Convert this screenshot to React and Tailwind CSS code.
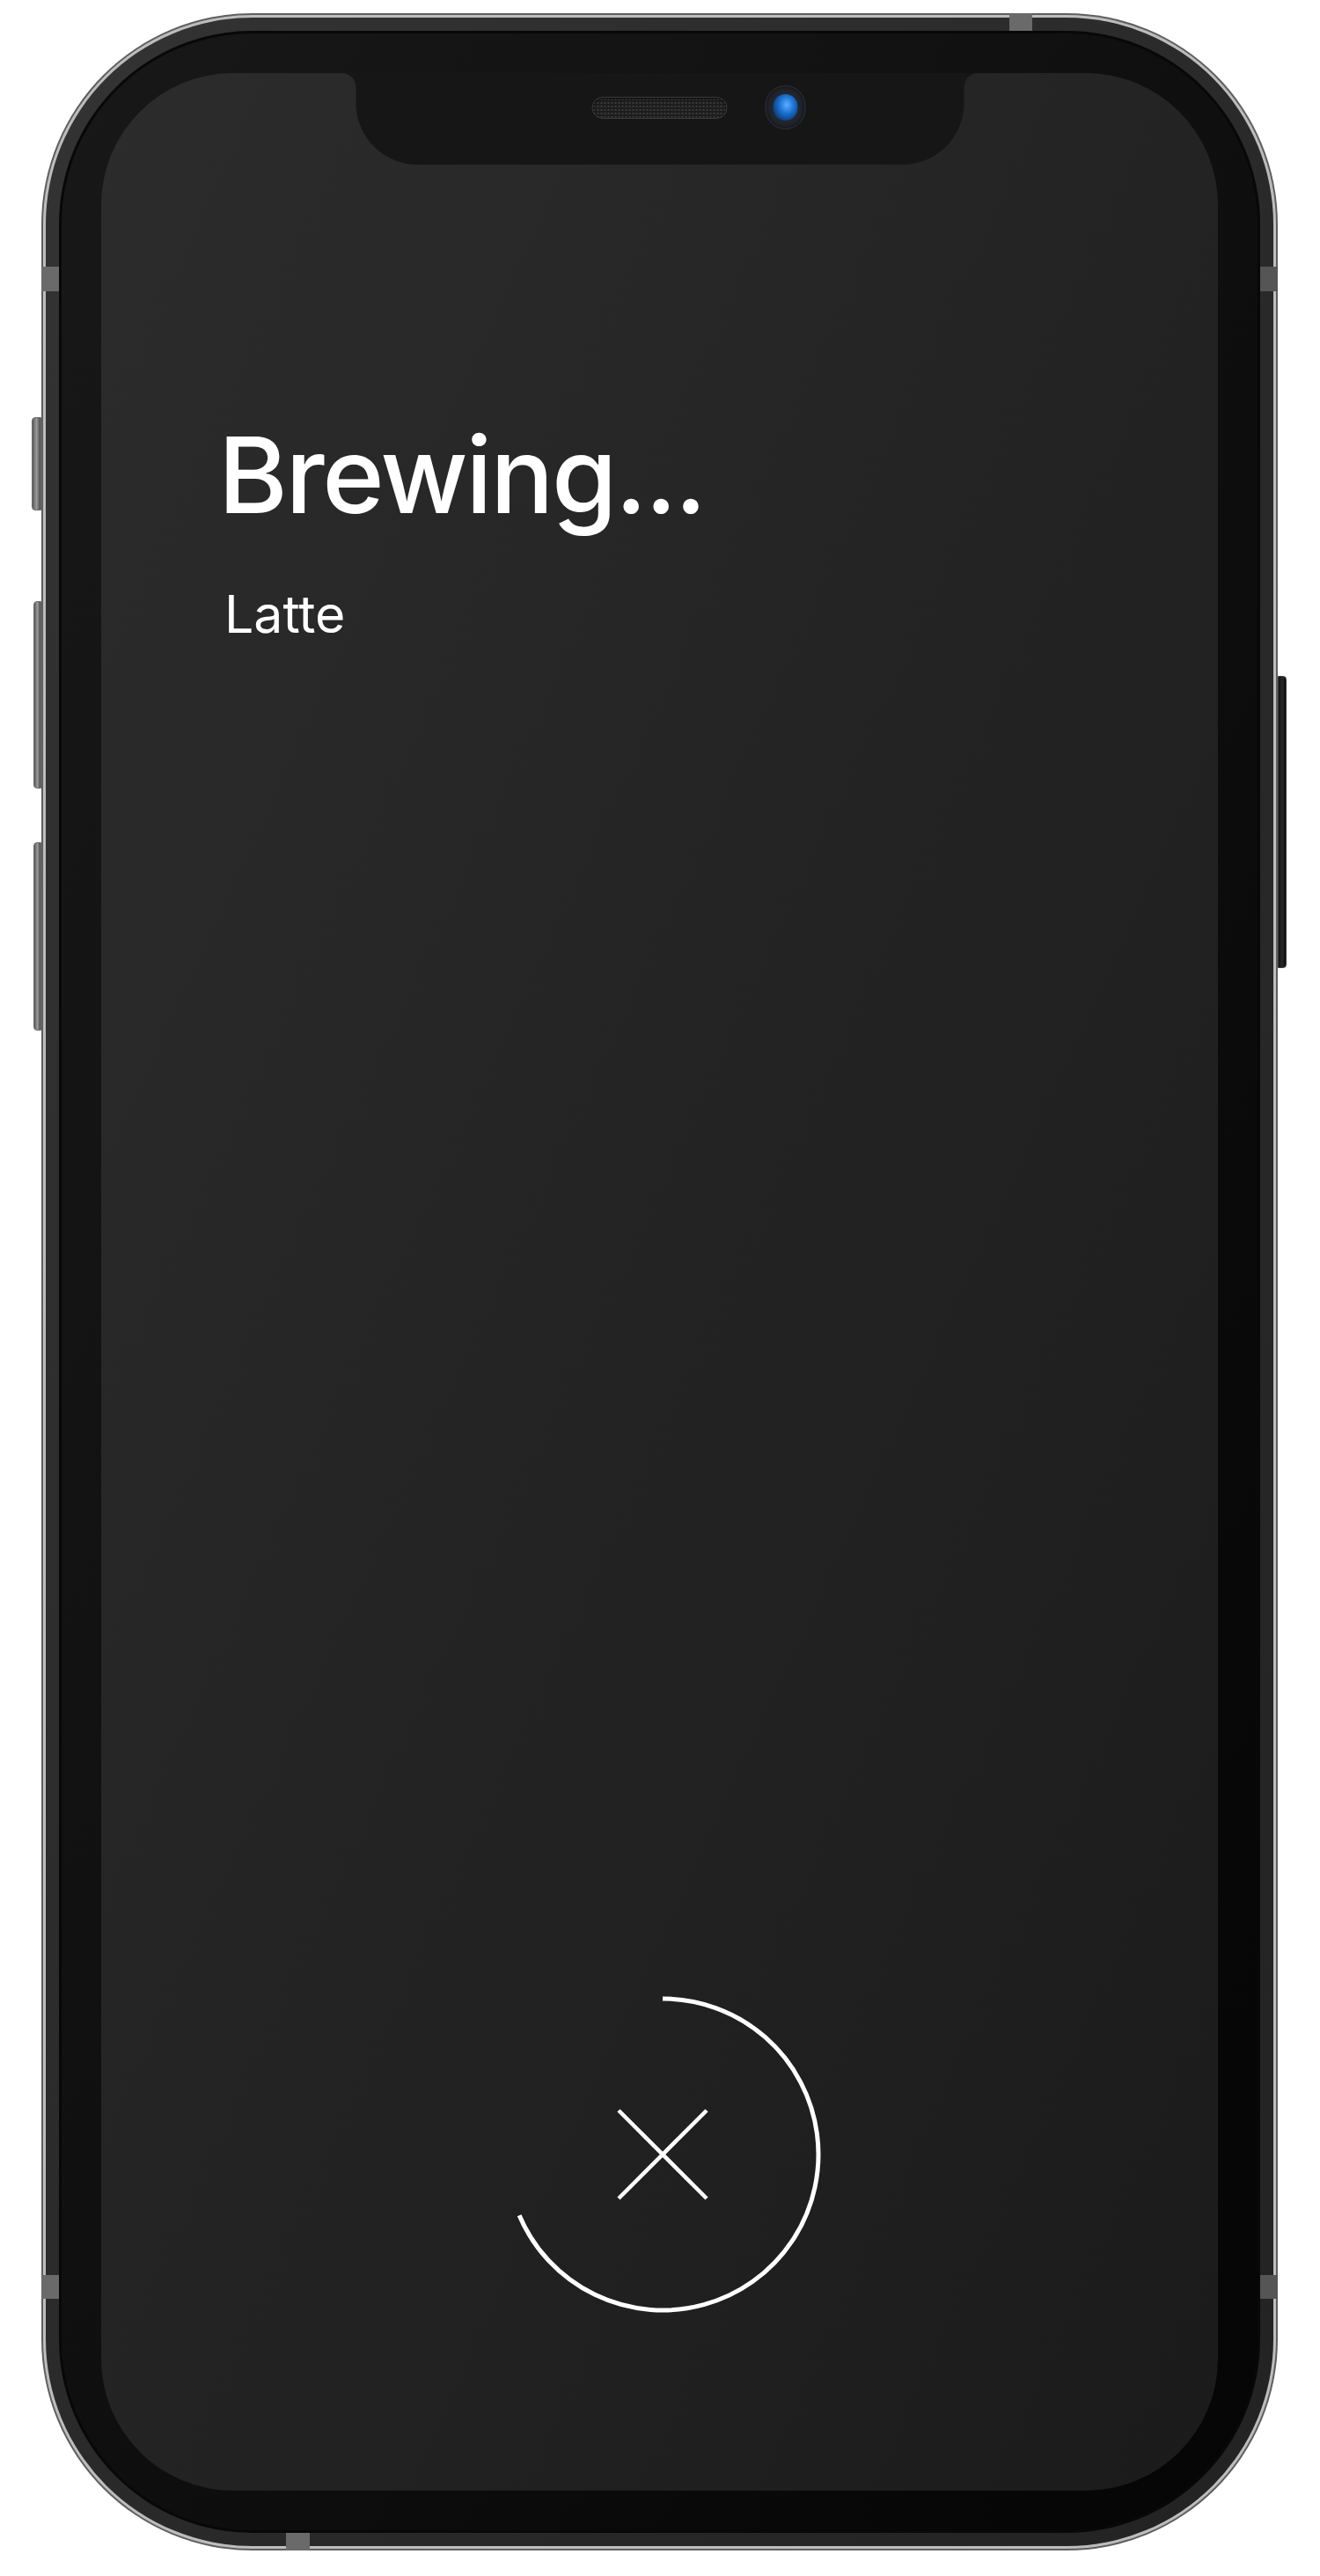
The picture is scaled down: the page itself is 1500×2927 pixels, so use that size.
import React from "react";

// Circular brewing progress with a cancel cross in the middle
function BrewProgress({ progress = 0.686 }) {
  const size = 370;
  const c = size / 2;
  const r = 177;
  const angle = progress * 2 * Math.PI;
  const endX = c + r * Math.sin(angle);
  const endY = c - r * Math.cos(angle);
  const large = progress > 0.5 ? 1 : 0;
  return (
    <button
      type="button"
      aria-label="Cancel brewing"
      className="w-[370px] h-[370px] bg-transparent border-0 p-0"
    >
      <svg width={size} height={size} viewBox={`0 0 ${size} ${size}`} className="block">
        <path
          d={`M ${c} ${c - r} A ${r} ${r} 0 ${large} 1 ${endX} ${endY}`}
          fill="none"
          stroke="#ffffff"
          strokeWidth="5"
          strokeLinecap="butt"
        />
        <g stroke="#ffffff" strokeWidth="4.5" strokeLinecap="butt">
          <line x1={c - 50} y1={c - 50} x2={c + 50} y2={c + 50} />
          <line x1={c + 50} y1={c - 50} x2={c - 50} y2={c + 50} />
        </g>
      </svg>
    </button>
  );
}

// Notch with earpiece grille and front camera
function Notch() {
  return (
    <div className="absolute top-0 left-1/2 -translate-x-1/2 w-[723px] h-[104px]">
      <svg width="723" height="104" viewBox="0 0 723 104" className="absolute inset-0 block">
        <path
          d="M0 0 H723 A16 16 0 0 0 707 16 V34 A70 70 0 0 1 637 104 H86 A70 70 0 0 1 16 34 V16 A16 16 0 0 0 0 0 Z"
          fill="#161616"
        />
      </svg>
      <div className="relative grid grid-cols-[1fr_auto_1fr] items-center pt-[14px]">
        <div />
        <div className="w-[154px] h-[25px] rounded-full border border-[#3c3c3c] bg-[#1d1d1d] bg-[radial-gradient(circle,#3b3b3b_1px,transparent_1.3px)] bg-[length:4px_4px] shadow-[inset_0_1px_3px_rgba(0,0,0,0.8)]" />
        <div className="flex pl-[43px]">
          <div className="w-[46px] h-[50px] rounded-full bg-[#23262d] border border-[#2c3038] flex items-center justify-center shadow-[inset_0_0_6px_rgba(0,0,0,0.7)]">
            <div className="w-[28px] h-[30px] rounded-full bg-[radial-gradient(ellipse_at_55%_40%,#5ab0ff_0%,#1a6fd0_40%,#0c3c78_75%,#071d3a_100%)]" />
          </div>
        </div>
      </div>
    </div>
  );
}

const sideKey =
  "rounded-l-[4px] border border-[#6b6b6b] bg-linear-to-r from-[#5a5a5a] via-[#9a9a9a] to-[#4a4a4a]";

function Phone({ children }) {
  return (
    <div className="flex items-start">
      {/* action button and volume keys */}
      <div className="flex flex-col w-[11px] pt-[459px]">
        <div className={`h-[106px] ${sideKey}`} />
        <div className={`ml-[2px] mt-[103px] h-[213px] ${sideKey}`} />
        <div className={`ml-[2px] mt-[61px] h-[214px] ${sideKey}`} />
      </div>

      {/* frame rings */}
      <div className="relative w-[1405px] h-[2883px] rounded-[240px] bg-[#5e5e5e] p-[2px]">
        <div className="h-full rounded-[238px] bg-[#bdbdbd] p-[3px]">
          <div className="h-full rounded-[235px] bg-linear-to-br from-[#333333] via-[#2a2a2a] to-[#232323] p-[15px]">
            <div className="h-full rounded-[220px] bg-[#080808] p-[3px]">
              {/* bezel */}
              <div className="h-full rounded-[217px] bg-linear-to-br from-[#181818] via-[#0f0f0f] to-[#050505] p-[45px]">
                {/* screen */}
                <div className="relative h-full rounded-[150px] overflow-hidden bg-linear-to-br from-[#2c2c2c] to-[#1b1b1b]">
                  <Notch />
                  {children}
                </div>
              </div>
            </div>
          </div>
        </div>

        {/* antenna bands */}
        <div className="absolute left-[1100px] top-0 w-[26px] h-[20px] bg-[#6a6a6a]" />
        <div className="absolute left-0 top-[288px] w-[20px] h-[28px] bg-[#6a6a6a]" />
        <div className="absolute right-0 top-[288px] w-[20px] h-[28px] bg-[#555555]" />
        <div className="absolute left-0 top-[2570px] w-[20px] h-[27px] bg-[#6a6a6a]" />
        <div className="absolute right-0 top-[2570px] w-[20px] h-[27px] bg-[#555555]" />
        <div className="absolute left-[278px] bottom-0 w-[27px] h-[20px] bg-[#6a6a6a]" />
      </div>

      {/* side button */}
      <div className="pt-[753px]">
        <div className="w-[10px] h-[332px] rounded-r-[4px] border border-[#3d3d3d] bg-linear-to-r from-[#111111] via-[#2a2a2a] to-[#0d0d0d]" />
      </div>
    </div>
  );
}

export default function App() {
  return (
    <div className="w-full h-[2927px] bg-white pt-[15px] pl-[36px] font-['Inter','Liberation_Sans',sans-serif]">
      <Phone>
        <div className="flex flex-col h-full">
          <div className="flex flex-col items-start gap-[68px] pt-[397px] pl-[133px] text-white">
            <h1 className="text-[120px] leading-none font-medium tracking-[-0.02em]">Brewing...</h1>
            <p className="pl-[7px] text-[59px] leading-none font-normal">Latte</p>
          </div>
          <div className="flex-1" />
          <div className="flex justify-center pb-[197px] pl-[6px]">
            <BrewProgress progress={0.686} />
          </div>
        </div>
      </Phone>
    </div>
  );
}
